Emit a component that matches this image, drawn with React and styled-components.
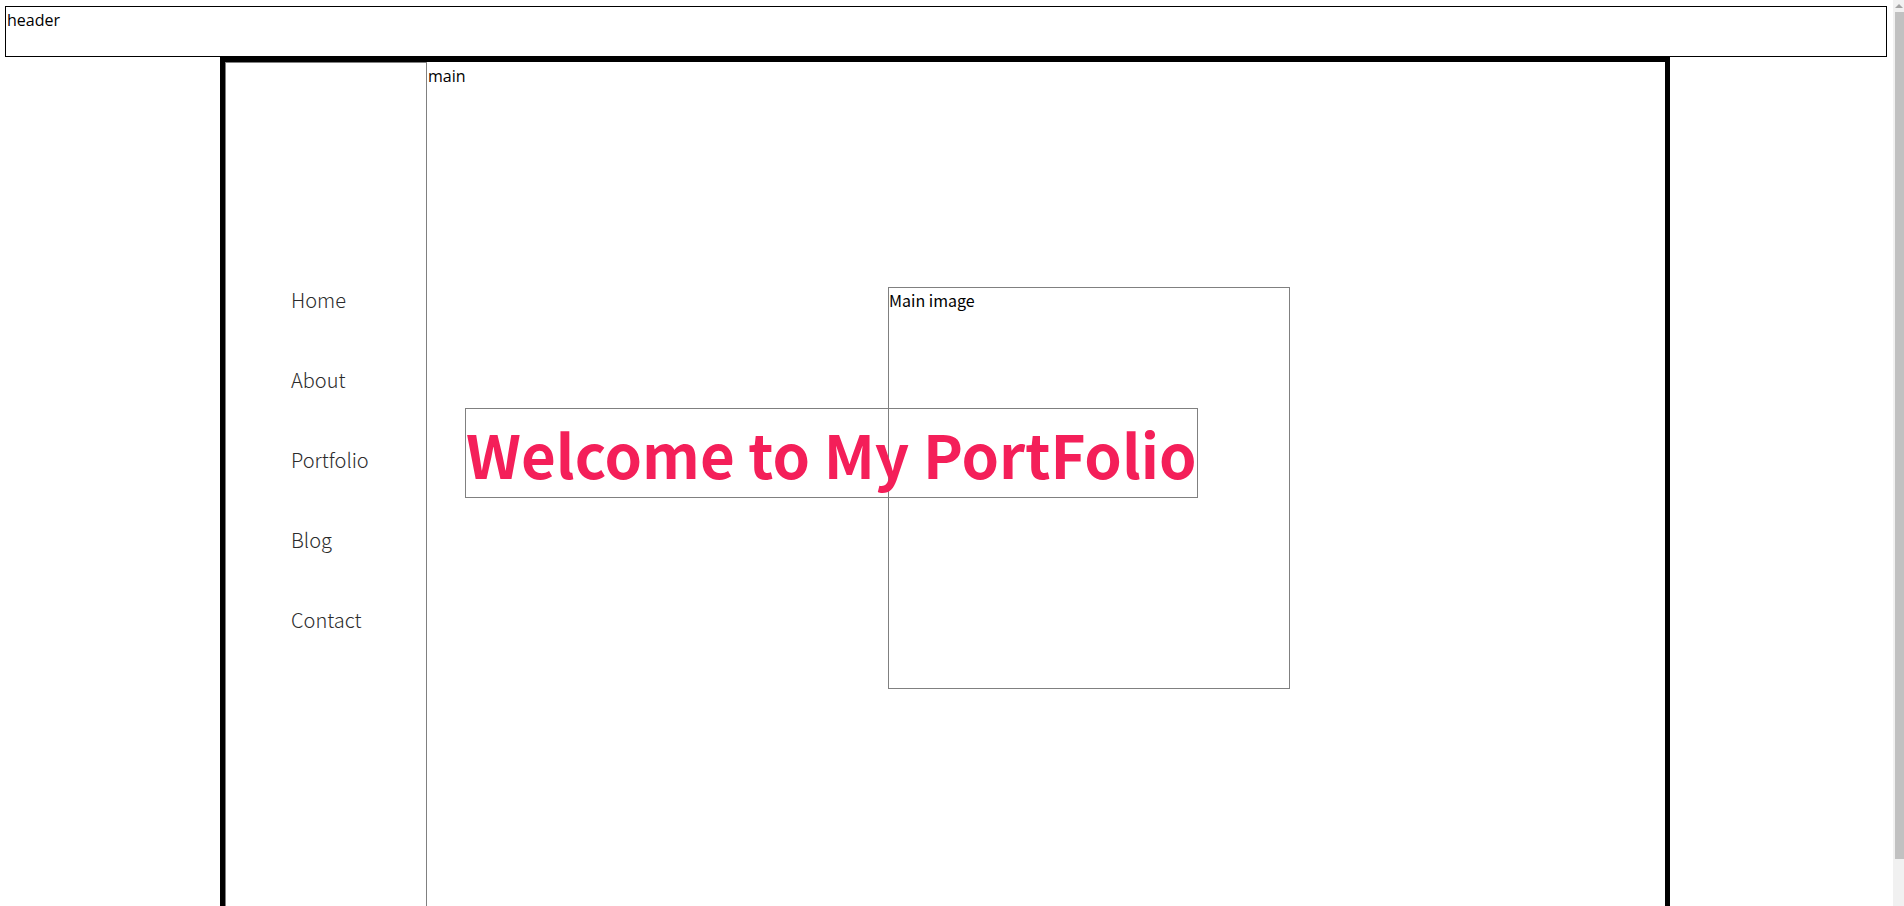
import React from "react";
import styled, { createGlobalStyle } from "styled-components";

const color = {
  ink: "#000",
  line: "#808080",
  text: "#2b2b2b",
  accent: "#f41f59",
  track: "#f1f1f1",
  thumb: "#c1c1c1",
};

const GlobalStyle = createGlobalStyle`
  html, body {
    margin: 0;
    padding: 0;
    background: #fff;
  }
  body {
    font-family: "Open Sans", "Liberation Sans", Arial, sans-serif;
    font-size: 16px;
    color: #000;
  }
`;

const Page = styled.div`
  width: calc(100% - 14px);
  padding: 6px 3px 0 0;
  display: flex;
  flex-direction: column;
`;

const Header = styled.header`
  box-sizing: border-box;
  height: 51px;
  margin: 0 3px 0 5px;
  padding: 1px 0 0 1px;
  border: 1px solid ${color.ink};
  line-height: 24px;
`;

const Frame = styled.div`
  width: 1440px;
  height: 866px;
  margin: 0 auto;
  border: 5px solid ${color.ink};
  display: flex;
`;

const Sidebar = styled.aside`
  width: 200px;
  border: 1px solid ${color.line};
  flex-shrink: 0;
`;

const NavList = styled.ul`
  list-style: none;
  margin: 0;
  padding: 197px 0 0 65px;
`;

const NavItem = styled.li`
  height: 80px;
  line-height: 80px;
  font-family: "Noto Sans CJK KR", "Noto Sans", sans-serif;
  font-weight: 300;
  font-size: 20px;
  color: ${color.text};
`;

const Main = styled.main`
  flex: 1;
  position: relative;
  padding-top: 2px;
`;

const MainLabel = styled.div`
  line-height: 24px;
  padding-left: 1px;
`;

const ImageBox = styled.div`
  width: 400px;
  height: 400px;
  margin: 199px 0 0 461px;
  border: 1px solid ${color.line};
  font-family: "Noto Sans CJK KR", sans-serif;
  font-size: 16px;
`;

// sits across the image box
const Title = styled.h1`
  position: absolute;
  left: 38px;
  top: 346px;
  margin: 0;
  width: fit-content;
  border: 1px solid ${color.line};
  font-family: "Noto Sans CJK KR", sans-serif;
  font-weight: 700;
  font-size: 60px;
  line-height: 88px;
  color: ${color.accent};
  white-space: nowrap;
`;

/* the browser's scrollbar, as it shows in the picture */
const ScrollTrack = styled.div`
  position: fixed;
  top: 0;
  right: 0;
  width: 11px;
  height: 100vh;
  background: ${color.track};
  display: flex;
  flex-direction: column;
  align-items: flex-end;
`;

const ScrollArrow = styled.div`
  width: 0;
  height: 0;
  margin: 4px 1px 4px 0;
  border-left: 4px solid transparent;
  border-right: 4px solid transparent;
  border-bottom: 4px solid #a3a3a3;
`;

const ScrollThumb = styled.div`
  width: 9px;
  height: 847px;
  background: ${color.thumb};
`;

const links = ["Home", "About", "Portfolio", "Blog", "Contact"];

export default function App() {
  return (
    <>
      <GlobalStyle />
      <Page>
        <Header>header</Header>
        <Frame>
          <Sidebar>
            <NavList>
              {links.map((link) => (
                <NavItem key={link}>{link}</NavItem>
              ))}
            </NavList>
          </Sidebar>
          <Main>
            <MainLabel>main</MainLabel>
            <ImageBox>Main image</ImageBox>
            <Title>Welcome to My PortFolio</Title>
          </Main>
        </Frame>
      </Page>
      <ScrollTrack>
        <ScrollArrow />
        <ScrollThumb />
      </ScrollTrack>
    </>
  );
}
